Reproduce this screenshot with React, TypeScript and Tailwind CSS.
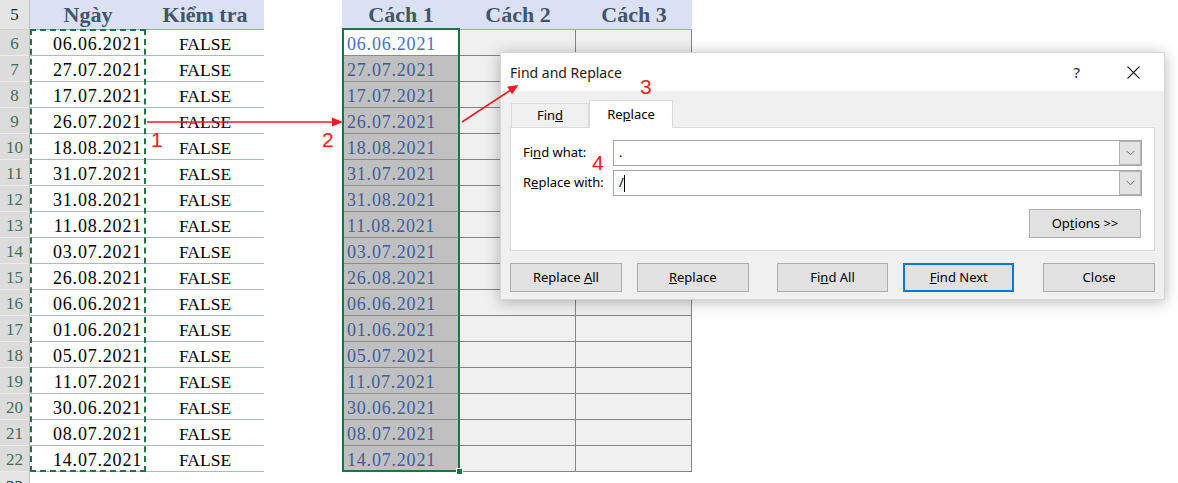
import React from "react";

const dates = [
  "06.06.2021",
  "27.07.2021",
  "17.07.2021",
  "26.07.2021",
  "18.08.2021",
  "31.07.2021",
  "31.08.2021",
  "11.08.2021",
  "03.07.2021",
  "26.08.2021",
  "06.06.2021",
  "01.06.2021",
  "05.07.2021",
  "11.07.2021",
  "30.06.2021",
  "08.07.2021",
  "14.07.2021",
];

function Header({ children, w }: { children: React.ReactNode; w: string }) {
  return (
    <div
      className={`${w} h-[30px] bg-[#d9e1f2] border-b border-[#8ea9db] flex items-center justify-center font-bold text-[22px] text-[#44546a]`}
    >
      {children}
    </div>
  );
}

function Combo({ children }: { children: React.ReactNode }) {
  return (
    <div className="w-[529px] h-[26px] border border-[#a6a6a6] bg-white flex">
      <div className="flex-1 flex items-center pl-[5px] text-[13px] text-black">{children}</div>
      <div className="w-[22px] h-full bg-[#e3e3e3] border border-[#b4b4b4] flex items-center justify-center">
        <svg width="9" height="6" viewBox="0 0 9 6">
          <path d="M0.5 0.8 L4.5 4.8 L8.5 0.8" fill="none" stroke="#707070" strokeWidth="1" />
        </svg>
      </div>
    </div>
  );
}

function Btn({ children, w = "w-[112px]", primary = false, ml = "" }: { children: React.ReactNode; w?: string; primary?: boolean; ml?: string }) {
  return (
    <div
      className={`${w} ${ml} h-[29px] bg-[#e1e1e1] flex items-center justify-center text-[13px] text-black ${
        primary ? "border-2 border-[#0078d7]" : "border border-[#adadad]"
      }`}
    >
      <span>{children}</span>
    </div>
  );
}

export default function App() {
  return (
    <div className="relative w-[1178px] h-[483px] overflow-hidden bg-white font-['Liberation_Serif',serif]">
      <div className="flex">
        {/* Row numbers */}
        <div className="w-[30px] flex flex-col bg-[#e4e4e4] border-r border-[#bfbfbf]">
          <div className="h-[30px] flex items-center justify-center text-[17px] text-[#262626] border-b border-[#cfcfcf]">5</div>
          {dates.map((_, i) => (
            <div
              key={i}
              className="h-[26px] pt-[3px] flex items-center justify-center text-[17px] text-[#446e55] bg-[#dcdcdc] border-b border-[#ececec]"
            >
              {i + 6}
            </div>
          ))}
          <div className="h-[26px] pt-[3px] flex items-center justify-center text-[17px] text-[#262626]">23</div>
        </div>

        {/* Ngày */}
        <div className="w-[116px] flex flex-col">
          <Header w="w-[116px]">Ngày</Header>
          <div className="relative">
            {dates.map((d, i) => (
              <div
                key={i}
                className="h-[26px] pt-[3px] border-b border-[#a9b8cc] flex items-center justify-end pr-[4px] text-[18px] tracking-[0.8px] text-black"
              >
                {d}
              </div>
            ))}
            <div className="absolute inset-0 -top-[1px] border-2 border-dashed border-[#217346] pointer-events-none" />
          </div>
        </div>

        {/* Kiểm tra */}
        <div className="w-[118px] flex flex-col">
          <Header w="w-[118px]">Kiểm tra</Header>
          {dates.map((_, i) => (
            <div
              key={i}
              className="h-[26px] pt-[3px] border-b border-[#a9b8cc] flex items-center justify-center text-[17.5px] text-black"
            >
              FALSE
            </div>
          ))}
        </div>

        <div className="w-[78px]" />

        {/* Cách 1 */}
        <div className="w-[118px] flex flex-col">
          <Header w="w-[118px]">Cách 1</Header>
          <div className="relative">
            {dates.map((d, i) => (
              <div
                key={i}
                className={`h-[26px] pt-[3px] border-b border-[#8c8c8c] flex items-center pl-[5px] text-[18px] tracking-[0.8px] ${
                  i === 0 ? "bg-white text-[#4472c4]" : "bg-[#c0c0c0] text-[#3f5d9c]"
                }`}
              >
                {d}
              </div>
            ))}
            <div className="absolute inset-0 -top-[2px] border-2 border-[#217346] pointer-events-none" />
            <div className="absolute -right-[3px] -bottom-[3px] w-[7px] h-[7px] bg-[#217346] border border-white" />
          </div>
        </div>

        {/* Cách 2 */}
        <div className="w-[116px] flex flex-col">
          <Header w="w-[116px]">Cách 2</Header>
          {dates.map((_, i) => (
            <div key={i} className="h-[26px] bg-[#f0f0f0] border-b border-r border-[#858585]" />
          ))}
        </div>

        {/* Cách 3 */}
        <div className="w-[116px] flex flex-col">
          <Header w="w-[116px]">Cách 3</Header>
          {dates.map((_, i) => (
            <div key={i} className="h-[26px] bg-[#f0f0f0] border-b border-r border-[#858585]" />
          ))}
        </div>
      </div>

      {/* Find and Replace dialog */}
      <div className="absolute left-[500px] top-[52px] w-[665px] h-[248px] bg-[#f0f0f0] border border-[#d6d6d6] shadow-[0_2px_14px_rgba(0,0,0,0.28)] font-['Noto_Sans',sans-serif] flex flex-col">
        <div className="h-[38px] bg-white flex items-center pl-[9px] text-[14px] text-[#1a1a1a]">
          <span>Find and Replace</span>
          <span className="ml-auto text-[15px] text-[#222]">?</span>
          <svg className="ml-[47px] mr-[24px]" width="13" height="13" viewBox="0 0 13 13">
            <path d="M0.5 0.5 L12.5 12.5 M12.5 0.5 L0.5 12.5" stroke="#222" strokeWidth="1.1" />
          </svg>
        </div>
        <div className="flex-1 px-[9px] pt-[9px]">
          <div className="flex h-[27px] items-end">
            <div className="ml-[1px] h-[24px] w-[78px] border border-b-0 border-[#dadada] flex items-center justify-center text-[13px] text-black">
              <span>
                Fin<u>d</u>
              </span>
            </div>
            <div className="h-[28px] w-[84px] bg-white border border-b-0 border-[#dadada] -mb-px relative z-10 flex items-center justify-center text-[13px] text-black">
              <span>
                Re<u>p</u>lace
              </span>
            </div>
          </div>
          <div className="h-[124px] bg-white border border-[#dadada] pt-[12px] pl-[12px]">
            <div className="flex items-center h-[26px]">
              <span className="w-[90px] text-[13px] text-black">
                Fi<u>n</u>d what:
              </span>
              <Combo>.</Combo>
            </div>
            <div className="flex items-center h-[26px] mt-[4px]">
              <span className="w-[90px] text-[13px] text-black">
                R<u>e</u>place with:
              </span>
              <Combo>
                <span>/</span>
                <span className="w-px h-[17px] bg-black" />
              </Combo>
            </div>
            <div className="flex mt-[13px] ml-[506px]">
              <Btn w="w-[112px]">
                Op<u>t</u>ions &gt;&gt;
              </Btn>
            </div>
          </div>
          <div className="flex mt-[12px]">
            <Btn>
              Replace <u>A</u>ll
            </Btn>
            <Btn ml="ml-[15px]">
              <u>R</u>eplace
            </Btn>
            <Btn ml="ml-[28px]">
              Fi<u>n</u>d All
            </Btn>
            <Btn ml="ml-[15px]" w="w-[111px]" primary>
              <u>F</u>ind Next
            </Btn>
            <Btn ml="ml-[29px]">Close</Btn>
          </div>
        </div>
      </div>

      {/* Annotations */}
      <svg className="absolute inset-0 pointer-events-none" width="1178" height="483" viewBox="0 0 1178 483">
        <line x1="147" y1="122" x2="334" y2="122" stroke="#ec1c24" strokeWidth="1.5" />
        <polygon points="343,122 332,117.5 332,126.5" fill="#ec1c24" />
        <line x1="462" y1="122" x2="510" y2="90.5" stroke="#ec1c24" strokeWidth="1.5" />
        <polygon points="518.5,85 512.1,94.3 507.1,86.7" fill="#ec1c24" />
      </svg>
      <div className="absolute left-[151px] top-[129px] text-[21px] leading-none text-[#ec1c24] font-['Liberation_Sans',sans-serif]">1</div>
      <div className="absolute left-[322px] top-[129px] text-[21px] leading-none text-[#ec1c24] font-['Liberation_Sans',sans-serif]">2</div>
      <div className="absolute left-[640px] top-[76px] text-[21px] leading-none text-[#ec1c24] font-['Liberation_Sans',sans-serif]">3</div>
      <div className="absolute left-[592px] top-[152px] text-[21px] leading-none text-[#ec1c24] font-['Liberation_Sans',sans-serif]">4</div>
    </div>
  );
}
